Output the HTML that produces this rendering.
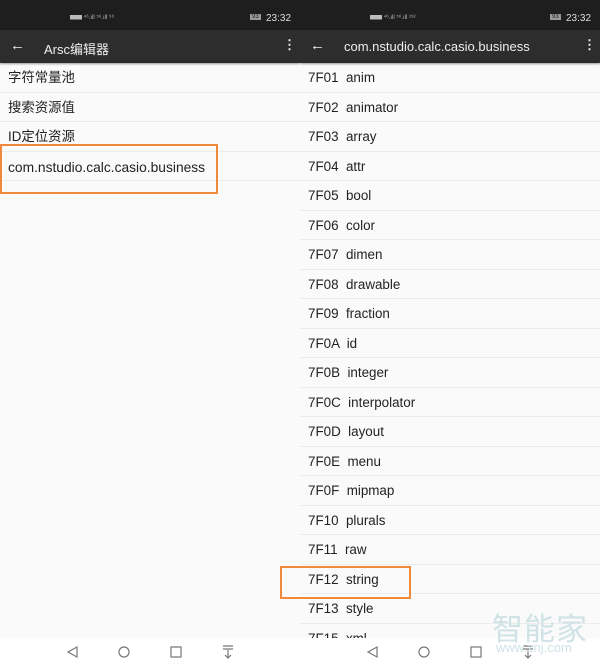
<!DOCTYPE html>
<html><head><meta charset="utf-8"><style>
*{margin:0;padding:0;box-sizing:border-box}
body{width:600px;height:666px;overflow:hidden;background:#fafafa;font-family:"Liberation Sans","Noto Sans CJK SC",sans-serif;position:relative}
.p{position:absolute;top:0;width:300px;height:666px;overflow:hidden;background:#fafafa}
.sb{position:absolute;top:0;left:0;width:300px;height:30px;background:#1e1e1e;color:#ddd;font-size:10px}
.tb{position:absolute;top:30px;left:0;width:300px;height:33px;background:#2d2d2d;color:#eee;font-size:13px;box-shadow:0 1px 2px rgba(0,0,0,.4)}
.row{position:absolute;left:0;width:300px;height:29.5px;border-bottom:1px solid #ececec;font-size:13.4px;color:#222;line-height:29px;padding-left:8px;white-space:pre}
.nav{position:absolute;top:638px;left:0;width:300px;height:28px;background:#fff}
.box{position:absolute;border:2px solid #f08a3a}
</style></head><body>
<div class="p" style="left:0">
<div class="sb"><span style="position:absolute;left:70px;top:12px;font-size:6px;color:#bbb">▆▆ ⁴⁶.ıll ⁵⁶.ıll ⁹⁹</span><span style="position:absolute;left:250px;top:14px;font-size:6px;background:#999;color:#222;padding:0 2px">93</span><span style="position:absolute;left:266px;top:13px">23:32</span></div>
<div class="tb"><span style="position:absolute;left:10px;top:7px;font-size:15px">←</span><span style="position:absolute;left:44px;top:9px">Arsc编辑器</span><span style="position:absolute;left:283px;top:7px;font-size:13px;font-weight:bold">⋮</span></div>
<div class="row" style="top:63px">字符常量池</div>
<div class="row" style="top:92.5px">搜索资源值</div>
<div class="row" style="top:122px">ID定位资源</div>
<div class="row" style="top:151.5px;line-height:31px;font-size:13.8px">com.nstudio.calc.casio.business</div>
<div class="nav"><svg width="300" height="28"><g fill="none" stroke="#777" stroke-width="1.2"><path d="M77 9 L68 14 L77 19Z"/><circle cx="124" cy="14" r="5"/><rect x="171" y="9" width="10" height="10"/><path d="M223 8h10M223 11h10M228 12v8M225 17l3 3 3-3"/></g></svg></div>
</div>
<div class="p" style="left:300px">
<div class="sb"><span style="position:absolute;left:70px;top:12px;font-size:6px;color:#bbb">▆▆ ⁴⁶.ıll ⁵⁶.ıll ¹⁵²</span><span style="position:absolute;left:250px;top:14px;font-size:6px;background:#999;color:#222;padding:0 2px">93</span><span style="position:absolute;left:266px;top:13px">23:32</span></div>
<div class="tb"><span style="position:absolute;left:10px;top:7px;font-size:15px">←</span><span style="position:absolute;left:44px;top:9px">com.nstudio.calc.casio.business</span><span style="position:absolute;left:283px;top:7px;font-size:13px;font-weight:bold">⋮</span></div>
<div class="row" style="top:63px">7F01  anim</div>
<div class="row" style="top:92.5px">7F02  animator</div>
<div class="row" style="top:122px">7F03  array</div>
<div class="row" style="top:151.5px">7F04  attr</div>
<div class="row" style="top:181px">7F05  bool</div>
<div class="row" style="top:210.5px">7F06  color</div>
<div class="row" style="top:240px">7F07  dimen</div>
<div class="row" style="top:269.5px">7F08  drawable</div>
<div class="row" style="top:299px">7F09  fraction</div>
<div class="row" style="top:328.5px">7F0A  id</div>
<div class="row" style="top:358px">7F0B  integer</div>
<div class="row" style="top:387.5px">7F0C  interpolator</div>
<div class="row" style="top:417px">7F0D  layout</div>
<div class="row" style="top:446.5px">7F0E  menu</div>
<div class="row" style="top:476px">7F0F  mipmap</div>
<div class="row" style="top:505.5px">7F10  plurals</div>
<div class="row" style="top:535px">7F11  raw</div>
<div class="row" style="top:564.5px">7F12  string</div>
<div class="row" style="top:594px">7F13  style</div>
<div class="row" style="top:623.5px">7F15  xml</div>
<div class="nav"><svg width="300" height="28"><g fill="none" stroke="#777" stroke-width="1.2"><path d="M77 9 L68 14 L77 19Z"/><circle cx="124" cy="14" r="5"/><rect x="171" y="9" width="10" height="10"/><path d="M223 8h10M223 11h10M228 12v8M225 17l3 3 3-3"/></g></svg></div>
<div style="position:absolute;left:192px;top:604px;font-size:31px;color:#cfe3e6;letter-spacing:1px">智能家</div>
<div style="position:absolute;left:196px;top:640px;font-size:13px;color:#cfe3e6">www.znj.com</div>
</div>
<div class="box" style="left:0;top:144px;width:218px;height:50px"></div>
<div class="box" style="left:280px;top:566px;width:131px;height:33px"></div>
</body></html>
